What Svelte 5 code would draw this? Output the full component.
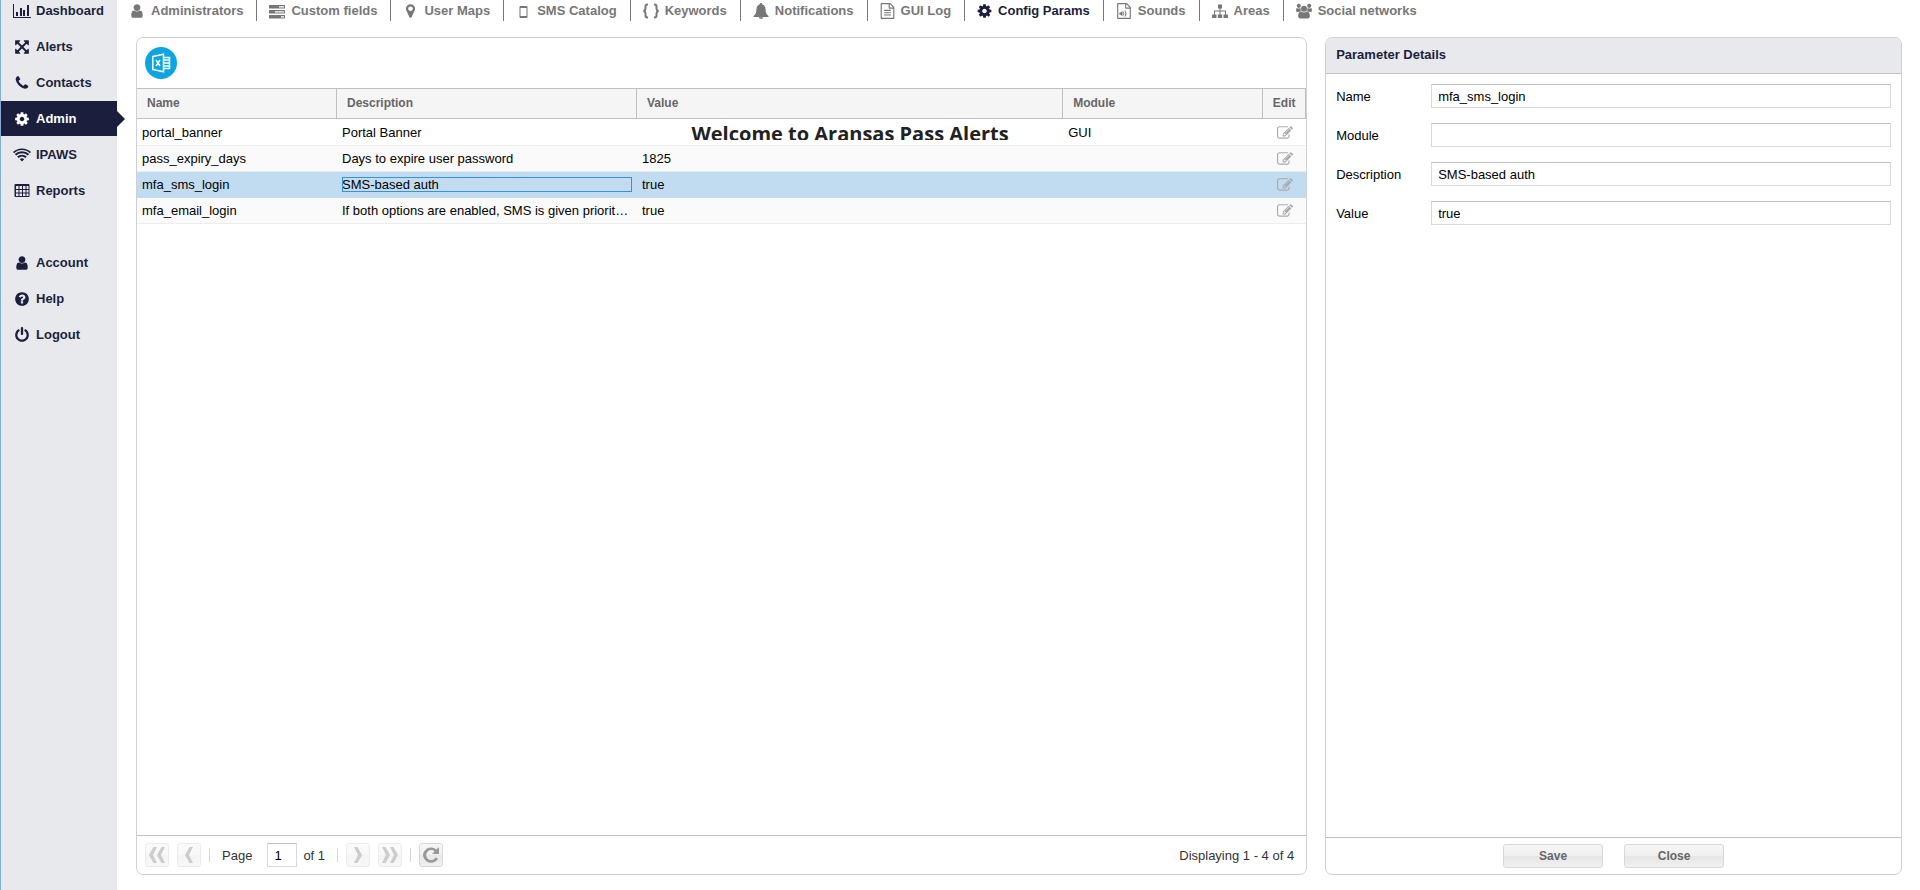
<script>
  const icons = {
    chart: {
      box: "0 0 18 16",
      d: "M0 1h1v13h17v1H0zM3 9h2v4H3zM7 5h2v8H7zM10 7h2v6h-2zM14 2h2v11h-2z",
    },
    arrows: {
      box: "0 0 1792 1792",
      d: "M1411 541l-355 355 355 355 144-144q29-31 70-14 39 17 39 59v448q0 26-19 45t-45 19h-448q-42 0-59-40-17-39 14-69l144-144-355-355-355 355 144 144q31 30 14 69-17 40-59 40h-448q-26 0-45-19t-19-45v-448q0-42 40-59 39-17 69 14l144 144 355-355-355-355-144 144q-19 19-45 19-12 0-24-5-40-17-40-59v-448q0-26 19-45t45-19h448q42 0 59 40 17 39-14 69l-144 144 355 355 355-355-144-144q-31-30-14-69 17-40 59-40h448q26 0 45 19t19 45v448q0 42-39 59-13 5-25 5-26 0-45-19z",
    },
    phone: {
      box: "0 0 1792 1792",
      d: "M1600 1240q0 27-10 70.500t-21 68.500q-21 50-122 106-94 51-186 51-27 0-52.500-3.500t-57.500-12.500-47.500-14.500-55.500-20.500-49-18q-98-35-175-83-128-79-264.500-215.500t-215.500-264.500q-48-77-83-175-3-9-18-49t-20.500-55.500-14.500-47.500-12.500-57.500-3.500-52.500q0-92 51-186 56-101 106-122 25-11 68.500-21t70.500-10q14 0 21 3 18 6 53 76 11 19 30 54t35 63.500 31 53.500q3 4 17.500 25t21.500 35.500 7 28.500q0 20-28.500 50t-62 55-62 53-28.500 46q0 9 5 22.500t8.500 20.500 14 24 11.500 19q76 137 174 235t235 174q2 1 19 11.500t24 14 20.500 8.500 22.500 5q18 0 46-28.500t53-62 55-62 50-28.500q14 0 28.500 7t35.500 21.500 25 17.500q25 15 53.500 31t63.500 35 54 30q70 35 76 53 3 7 3 21z",
    },
    cog: {
      box: "0 0 1792 1792",
      slim: true,
      d: "M1152 896q0-106-75-181t-181-75-181 75-75 181 75 181 181 75 181-75 75-181zm512-109v222q0 12-8 23t-20 13l-185 28q-19 54-39 91 35 50 107 138 10 12 10 25t-9 23q-27 37-99 108t-94 71q-12 0-26-9l-138-108q-44 23-91 38-16 136-29 186-7 28-36 28h-222q-14 0-24.500-8.500t-11.500-21.500l-28-184q-49-16-90-37l-141 107q-10 9-25 9-14 0-25-11-126-114-165-168-7-10-7-23 0-12 8-23 15-21 51-66.500t54-70.500q-27-50-41-99l-183-27q-13-2-21-12.500t-8-23.500v-222q0-12 8-23t19-13l186-28q14-46 39-92-40-57-107-138-10-12-10-24 0-10 9-23 26-36 98.500-107.500t94.500-71.500q13 0 26 10l138 107q44-23 91-38 16-136 29-186 7-28 36-28h222q14 0 24.500 8.500t11.500 21.500l28 184q49 16 90 37l142-107q9-9 24-9 13 0 25 10 129 119 165 170 7 8 7 22 0 12-8 23-15 21-51 66.500t-54 70.500q26 50 41 98l183 28q13 2 21 12.500t8 23.500z",
    },
    wifi: {
      box: "0 0 18 16",
      d: "M9 14.500l-2.200-2.300a3.200 3.200 0 0 1 4.400 0zM5.600 11L4.200 9.600a7 7 0 0 1 9.600 0L12.400 11a5 5 0 0 0-6.800 0zM3.200 8.500L1.800 7.100a10.400 10.400 0 0 1 14.400 0l-1.400 1.400a8.300 8.300 0 0 0-11.600 0zM1.200 6.300L0 5a13 13 0 0 1 18 0l-1.200 1.300a11 11 0 0 0-15.600 0z",
    },
    table: {
      box: "0 0 16 16",
      d: "M1.500 1h13a1 1 0 0 1 1 1v11a1 1 0 0 1-1 1h-13a1 1 0 0 1-1-1V2a1 1 0 0 1 1-1zM2 3v3h2.500V3zM5.500 3v3H8V3zM9 3v3h2.500V3zM12.500 3v3h2V3zM2 7v2.500h2.500V7zM5.500 7v2.500H8V7zM9 7v2.500h2.500V7zM12.500 7v2.500h2V7zM2 10.500V13h2.500v-2.500zM5.500 10.500V13H8v-2.500zM9 10.500V13h2.500v-2.500zM12.500 10.500V13h2v-2.500z",
    },
    user: {
      box: "0 0 1792 1792",
      d: "M1536 1399q0 109-62.500 187t-150.500 78h-854q-88 0-150.500-78t-62.500-187q0-85 8.500-160.500t31.500-152 58.500-131 94-89 134.500-34.500q131 128 313 128t313-128q76 0 134.500 34.500t94 89 58.500 131 31.500 152 8.500 160.500zm-256-887q0 159-112.500 271.500t-271.500 112.500-271.500-112.500-112.500-271.500 112.500-271.500 271.500-112.500 271.500 112.500 112.500 271.500z",
    },
    help: {
      box: "0 0 1792 1792",
      d: "M1024 1376v-192q0-14-9-23t-23-9h-192q-14 0-23 9t-9 23v192q0 14 9 23t23 9h192q14 0 23-9t9-23zm256-672q0-88-55.500-163t-138.500-116-170-41q-243 0-371 213-15 24 8 42l132 100q7 6 19 6 16 0 25-12 53-68 86-92 34-24 86-24 48 0 85.500 26t37.500 59q0 38-20 61t-68 45q-63 28-115.500 86.500t-52.500 125.500v36q0 14 9 23t23 9h192q14 0 23-9t9-23q0-19 21.500-49.500t54.500-49.500q32-18 49-28.500t46-35 44.500-48 28-60.500 12.500-81zm384 192q0 209-103 385.500t-279.500 279.500-385.500 103-385.500-103-279.500-279.500-103-385.500 103-385.500 279.500-279.500 385.500-103 385.500 103 279.500 279.500 103 385.500z",
    },
    power: {
      box: "0 0 1792 1792",
      d: "M1664 896q0 156-61 298t-164 245-245 164-298 61-298-61-245-164-164-245-61-298q0-182 80.500-343t226.500-270q43-32 95.500-25t83.500 50q32 42 24.500 94.500t-49.500 84.500q-98 74-151.500 181t-53.500 228q0 104 40.500 198.500t109.500 163.500 163.500 109.500 198.500 40.500 198.500-40.500 163.500-109.500 109.500-163.500 40.500-198.500q0-121-53.500-228t-151.500-181q-42-32-49.500-84.500t24.500-94.500q31-43 84-50t95 25q146 109 226.500 270t80.500 343zm-640-768v640q0 52-38 90t-90 38-90-38-38-90v-640q0-52 38-90t90-38 90 38 38 90z",
    },
    tasks: {
      box: "0 0 16 16",
      d: "M.5 2h15a.5.5 0 0 1 .5.5v2.500a.5.5 0 0 1-.5.500H.5a.5.500 0 0 1-.5-.5v-2.500A.5.5 0 0 1 .5 2zM10 3.200v1.200h5V3.200zM.5 7h15a.5.5 0 0 1 .5.5v2.500a.5.5 0 0 1-.5.5H.5a.5.500 0 0 1-.5-.5V7.500A.5.5 0 0 1 .5 7zM6 8.200v1.200h9V8.200zM.5 12h15a.5.5 0 0 1 .5.5v2.500a.5.5 0 0 1-.5.5H.5a.5.500 0 0 1-.5-.5v-2.500a.5.5 0 0 1 .5-.5zM12 13.200v1.200h3v-1.200z",
    },
    marker: {
      box: "0 0 1792 1792",
      slim: true,
      d: "M1152 640q0-106-75-181t-181-75-181 75-75 181 75 181 181 75 181-75 75-181zm256 0q0 109-33 179l-364 774q-16 33-47.500 52t-67.500 19-67.500-19-46.500-52l-365-774q-33-70-33-179 0-212 150-362t362-150 362 150 150 362z",
    },
    mobile: {
      box: "0 0 16 16",
      slim: true,
      d: "M5 3h6a1 1 0 0 1 1 1v10a1 1 0 0 1-1 1H5a1 1 0 0 1-1-1V4a1 1 0 0 1 1-1zM5 5v8h6V5z",
    },
    braces: {
      box: "0 0 16 16",
      stroke: true,
      d: "M5 1.500h-.500Q2.500 1.500 2.500 3.500v2.300Q2.500 7.500 .5 8q2 .5 2 2.200v2.300q0 2 2 2h.5M11 1.500h.5q2 0 2 2v2.300q0 1.700 2 2.200-2 .5-2 2.200v2.300q0 2-2 2h-.5",
    },
    bell: {
      box: "0 0 16 16",
      d: "M8 0a1.200 1.200 0 0 1 1.200 1.300C11.500 1.900 12.500 4 12.600 6.500c.1 3.200.8 5 2.900 6.500v1H.5v-1c2.100-1.500 2.800-3.300 2.900-6.500.1-2.500 1.100-4.600 3.400-5.200A1.200 1.200 0 0 1 8 0zM5.800 14.300h4.400a2.200 1.700 0 0 1-4.400 0z",
    },
    file: {
      box: "0 0 1792 1792",
      slim: true,
      d: "M1596 380q28 28 48 76t20 88v1152q0 40-28 68t-68 28h-1344q-40 0-68-28t-28-68v-1600q0-40 28-68t68-28h896q40 0 88 20t76 48zm-444-244v376h376q-10-29-22-41l-313-313q-12-12-41-22zm384 1528v-1024h-416q-40 0-68-28t-28-68v-416h-768v1536h1280zm-1024-864q0-14 9-23t23-9h704q14 0 23 9t9 23v64q0 14-9 23t-23 9h-704q-14 0-23-9t-9-23v-64zm736 224q14 0 23 9t9 23v64q0 14-9 23t-23 9h-704q-14 0-23-9t-9-23v-64q0-14 9-23t23-9h704zm0 256q14 0 23 9t9 23v64q0 14-9 23t-23 9h-704q-14 0-23-9t-9-23v-64q0-14 9-23t23-9h704z",
    },
    sound: {
      box: "0 0 1792 1792",
      d: "M1596 380q28 28 48 76t20 88v1152q0 40-28 68t-68 28h-1344q-40 0-68-28t-28-68v-1600q0-40 28-68t68-28h896q40 0 88 20t76 48zm-444-244v376h376q-10-29-22-41l-313-313q-12-12-41-22zm384 1528v-1024h-416q-40 0-68-28t-28-68v-416h-768v1536h1280zM384 1050h140l200-190v640l-200-190H384zM850 960q150 220 0 440l-75-60q100-160 0-320zM1030 810q290 370 0 740l-85-65q210-305 0-610z",
    },
    sitemap: {
      box: "0 0 16 16",
      d: "M6 1.500h4v4H8.500V7.500h5.500V11.500h2v3.500h-4.500v-3.500H13V8.500H8.500v3h1.700v3.500H5.800v-3.500h1.700v-3H3v3h1.500v3.500H0v-3.500h2V7.500h5.500v-2H6z",
    },
    group: {
      box: "0 0 17 16",
      d: "M8.500 2.500a3.200 3.200 0 1 1 0 6.400 3.200 3.200 0 0 1 0-6.400zM5.300 8.200Q8.500 11.200 11.700 8.200c2.300.3 3 2.700 3 5.300q0 2.500-2.200 2.500H4.500q-2.200 0-2.200-2.500c0-2.600.7-5 3-5.300zM3 .3a2.200 2.200 0 1 1 0 4.400 2.200 2.200 0 0 1 0-4.400zM14 .3a2.200 2.200 0 1 1 0 4.400 2.200 2.200 0 0 1 0-4.400zM.8 4.700q2 1.300 3.800.2.100 1.600 1 2.700-1.600.1-2.500 1.400H1.200Q0 9 0 7.500 0 5.300.8 4.700zM16.200 4.700q-2 1.300-3.800.2-.1 1.600-1 2.700 1.600.1 2.500 1.400h1.900Q17 9 17 7.500q0-2.200-.8-2.800z",
    },
    edit: {
      box: "0 0 1792 1792",
      d: "M888 1184l116-116-152-152-116 116v56h96v96h56zm440-720q-16-16-33 1l-350 350q-17 17-1 33t33-1l350-350q17-17 1-33zm80 594v190q0 119-84.500 203.500t-203.500 84.500h-832q-119 0-203.500-84.500t-84.500-203.500v-832q0-119 84.500-203.500t203.500-84.500h832q63 0 117 25 15 7 18 23 3 17-9 29l-49 49q-14 14-32 8-23-6-45-6h-832q-66 0-113 47t-47 113v832q0 66 47 113t113 47h832q66 0 113-47t47-113v-126q0-13 9-22l64-64q15-15 35-7t20 29zm-96-738l288 288-672 672h-288v-288zm444 132l-92 92-288-288 92-92q28-28 68-28t68 28l152 152q28 28 28 68t-28 68z",
    },
    first: { box: "0 0 16 16", d: "M4.500 0H8L4 8l4 8H4.500L0 8zM12.500 0H16l-4 8 4 8h-3.500L8 8z" },
    prev: { box: "0 0 16 16", d: "M8.500 0H12L8 8l4 8H8.500L4 8z" },
    next: { box: "0 0 16 16", d: "M7.500 0H4l4 8-4 8h3.500L12 8z" },
    last: { box: "0 0 16 16", d: "M3.500 0H0l4 8-4 8h3.500L8 8zM11.500 0H8l4 8-4 8h3.500L16 8z" },
    refresh: {
      box: "0 0 16 16",
      d: "M16 0v7H9l2.600-2.600A5 5 0 1 0 12.600 10.500l2.500 1.200A8 7.600 0 1 1 13.500 2.500z",
    },
  };

  const menu = [
    { label: "Dashboard", icon: "chart" },
    { label: "Alerts", icon: "arrows" },
    { label: "Contacts", icon: "phone" },
    { label: "Admin", icon: "cog" },
    { label: "IPAWS", icon: "wifi" },
    { label: "Reports", icon: "table" },
    { label: "Account", icon: "user", spaced: true },
    { label: "Help", icon: "help" },
    { label: "Logout", icon: "power" },
  ];

  const tabs = [
    { label: "Administrators", icon: "user" },
    { label: "Custom fields", icon: "tasks" },
    { label: "User Maps", icon: "marker" },
    { label: "SMS Catalog", icon: "mobile" },
    { label: "Keywords", icon: "braces" },
    { label: "Notifications", icon: "bell" },
    { label: "GUI Log", icon: "file" },
    { label: "Config Params", icon: "cog" },
    { label: "Sounds", icon: "sound" },
    { label: "Areas", icon: "sitemap" },
    { label: "Social networks", icon: "group" },
  ];

  const params = [
    { name: "portal_banner", description: "Portal Banner", value: "Welcome to Aransas Pass Alerts", module: "GUI", banner: true },
    { name: "pass_expiry_days", description: "Days to expire user password", value: "1825", module: "" },
    { name: "mfa_sms_login", description: "SMS-based auth", value: "true", module: "" },
    { name: "mfa_email_login", description: "If both options are enabled, SMS is given priority over email", value: "true", module: "" },
  ];

  let activeMenu = $state("Admin");
  let activeTab = $state("Config Params");
  let selected = $state(2);
  let page = $state("1");
  let form = $state({ ...params[2] });

  const select = (index) => {
    selected = index;
    form = { ...params[index] };
  };
</script>

{#snippet icon(name)}
  <svg
    class="icon"
    class:stroke={icons[name].stroke}
    class:slim={icons[name].slim}
    viewBox={icons[name].box}
    preserveAspectRatio={icons[name].slim ? "xMidYMid slice" : "xMidYMid meet"}
    aria-hidden="true"
  >
    <path fill-rule="evenodd" d={icons[name].d} />
  </svg>
{/snippet}

<div class="app">
  <aside>
    <nav class="menu">
      {#each menu as item}
        <a
          href="#{item.label.toLowerCase()}"
          class:active={item.label === activeMenu}
          class:spaced={item.spaced}
          onclick={() => (activeMenu = item.label)}
        >
          {@render icon(item.icon)}
          <span>{item.label}</span>
        </a>
      {/each}
    </nav>
  </aside>

  <main>
    <nav class="tabs">
      {#each tabs as tab}
        <a href="#admin" class:active={tab.label === activeTab} onclick={() => (activeTab = tab.label)}>
          {@render icon(tab.icon)}
          <span>{tab.label}</span>
        </a>
      {/each}
    </nav>

    <div class="panels">
      <section class="panel">
        <div class="toolbar">
          <button class="excel" aria-label="Export to Excel">
            <svg viewBox="0 0 32 32" fill="none" stroke="#fff" aria-hidden="true">
              <path stroke-width="1.500" d="M7.800 9.500L18.500 7.200V24.800L7.800 22.500zM19 10.500h5.500v11H19M19 13h5.500M19 16h5.500M19 19h5.500" />
              <path stroke-width="1.500" d="M11 13l4 6M15 13l-4 6" />
            </svg>
          </button>
        </div>

        <div class="grid">
          <table>
            <colgroup>
              <col class="col-name" />
              <col class="col-description" />
              <col />
              <col class="col-module" />
              <col class="col-edit" />
            </colgroup>
            <thead>
              <tr>
                <th>Name</th>
                <th>Description</th>
                <th>Value</th>
                <th>Module</th>
                <th class="edit">Edit</th>
              </tr>
            </thead>
            <tbody>
              {#each params as param, i}
                <tr class:selected={i === selected} onclick={() => select(i)}>
                  <td><div>{param.name}</div></td>
                  <td><div class:focused={i === selected}>{param.description}</div></td>
                  <td><div class:banner={param.banner}>{param.value}</div></td>
                  <td><div>{param.module}</div></td>
                  <td class="edit">
                    <button aria-label="Edit {param.name}">{@render icon("edit")}</button>
                  </td>
                </tr>
              {/each}
            </tbody>
          </table>
        </div>

        <footer class="pager">
          <button disabled aria-label="First page">{@render icon("first")}</button>
          <button disabled aria-label="Previous page">{@render icon("prev")}</button>
          <span class="separator"></span>
          <label for="page">Page</label>
          <input id="page" type="text" bind:value={page} />
          <span class="total">of 1</span>
          <span class="separator"></span>
          <button disabled aria-label="Next page">{@render icon("next")}</button>
          <button disabled aria-label="Last page">{@render icon("last")}</button>
          <span class="separator"></span>
          <button aria-label="Refresh">{@render icon("refresh")}</button>
          <span class="status">Displaying 1 - 4 of 4</span>
        </footer>
      </section>

      <section class="panel">
        <h2>Parameter Details</h2>
        <form id="details">
          <label for="name">Name</label>
          <input id="name" type="text" bind:value={form.name} />
          <label for="module">Module</label>
          <input id="module" type="text" bind:value={form.module} />
          <label for="description">Description</label>
          <input id="description" type="text" bind:value={form.description} />
          <label for="value">Value</label>
          <input id="value" type="text" bind:value={form.value} />
        </form>
        <footer class="actions">
          <button type="button">Save</button>
          <button type="button">Close</button>
        </footer>
      </section>
    </div>
  </main>
</div>

<style>
  :global(body) {
    background: #fff;
  }

  .app {
    display: flex;
    min-height: 100vh;
    font-family: "Liberation Sans", Arial, sans-serif;
    font-size: 13px;
    line-height: 15px;
    color: #000;
  }
  .app :global(*) {
    box-sizing: border-box;
  }

  button,
  input {
    font: inherit;
    margin: 0;
  }
  button {
    padding: 0;
    cursor: pointer;
  }
  a {
    color: inherit;
    text-decoration: none;
  }

  .icon {
    flex: none;
    width: 16px;
    height: 16px;
    fill: currentColor;
  }
  .icon.slim {
    width: 15px;
  }
  .icon.stroke {
    fill: none;
    stroke: currentColor;
    stroke-width: 2;
  }

  aside {
    flex: none;
    width: 117px;
    background: #e8e9ed;
    border-left: 1px solid #86abd3;
  }
  .menu {
    display: flex;
    flex-direction: column;
    gap: 1px;
    margin-top: -7px;
    font-weight: bold;
    color: #1b1f3d;
  }
  .menu a {
    position: relative;
    display: flex;
    align-items: center;
    gap: 5px;
    height: 35px;
    padding-left: 12px;
  }
  .menu .icon {
    width: 18px;
  }
  .menu .icon.slim {
    width: 16px;
    margin: 0 1px;
  }
  .menu a.spaced {
    margin-top: 36px;
  }
  .menu a.active {
    background: #1b1f3d;
    color: #fff;
  }
  .menu a.active::after {
    content: "";
    position: absolute;
    left: 100%;
    top: 10px;
    border: 8px solid transparent;
    border-left-color: #1b1f3d;
    border-right: 0;
  }

  main {
    flex: 1;
    min-width: 0;
    display: flex;
    flex-direction: column;
    padding: 0 18px 15px 19px;
  }

  .tabs {
    display: flex;
    height: 21px;
    margin-left: -7px;
    font-weight: bold;
    color: #777;
  }
  .tabs a {
    display: flex;
    align-items: center;
    gap: 6px;
    padding: 0 13px 0 12px;
    border-right: 1px solid #777;
    white-space: nowrap;
  }
  .tabs a:first-child {
    padding-left: 0;
  }
  .tabs a:last-child {
    border-right: 0;
  }
  .tabs a.active {
    color: #1b1f3d;
  }

  .panels {
    flex: 1;
    display: grid;
    grid-template-columns: 67fr 33fr;
    gap: 18px;
    margin-top: 16px;
  }
  .panel {
    display: flex;
    flex-direction: column;
    min-width: 0;
    border: 1px solid #ced0d6;
    border-radius: 7px;
    overflow: hidden;
  }

  .toolbar {
    padding: 9px 8px;
    border-bottom: 1px solid #c0c0c0;
  }
  .excel {
    display: block;
    width: 32px;
    height: 32px;
    border: 0;
    border-radius: 50%;
    background: #0ca5e2;
  }
  .excel svg {
    display: block;
  }

  .grid {
    flex: 1;
  }
  table {
    width: 100%;
    table-layout: fixed;
    border-collapse: separate;
    border-spacing: 0;
  }
  .col-name,
  .col-module {
    width: 200px;
  }
  .col-description {
    width: 300px;
  }
  .col-edit {
    width: 43px;
  }
  th {
    height: 30px;
    padding: 0 10px;
    text-align: left;
    font-size: 12px;
    color: #666;
    background: #f5f5f5;
    border-right: 1px solid #c0c0c0;
    border-bottom: 1px solid #c0c0c0;
  }
  td {
    height: 26px;
    padding: 0 5px;
    border-bottom: 1px solid #ededed;
  }
  tbody tr:first-child td {
    height: 27px;
    padding-top: 1px;
  }
  td div {
    height: 15px;
    overflow: hidden;
    white-space: nowrap;
    text-overflow: ellipsis;
  }
  tbody tr:nth-child(even) td {
    background: #fafafa;
  }
  tbody tr.selected td {
    background: #c1dcf1;
    border-bottom-color: #c1dcf1;
  }
  td .focused {
    outline: 1px solid #3892d3;
    outline-offset: -1px;
  }
  td .banner {
    text-align: center;
    font-family: "Open Sans", "Noto Sans", sans-serif;
    font-size: 20px;
    line-height: 18px;
    font-weight: bold;
    color: #222;
  }
  th.edit,
  td.edit {
    padding: 0;
    text-align: center;
  }
  td button {
    display: block;
    margin: 0 auto;
    border: 0;
    background: none;
    color: #aaa;
  }
  td button .icon {
    display: block;
  }

  .pager {
    display: flex;
    align-items: center;
    gap: 8px;
    height: 39px;
    padding: 0 12px 0 8px;
    border-top: 1px solid #c0c0c0;
    color: #333;
  }
  .pager button {
    display: flex;
    align-items: center;
    justify-content: center;
    width: 24px;
    height: 24px;
    border: 1px solid #d8d8d8;
    border-radius: 3px;
    background: linear-gradient(#f6f6f6, #f0f0f0 50%, #e8e8e8 50%, #f0f0f0);
    color: #999;
  }
  .pager button:disabled {
    border-color: #ebebeb;
    background: linear-gradient(#fbfbfb, #f8f8f8 50%, #f4f4f4 50%, #f8f8f8);
    color: #ccc;
  }
  .pager .separator {
    width: 1px;
    height: 14px;
    background: #d8d8d8;
  }
  .pager label {
    margin: 0 7px 0 4px;
  }
  .pager .total {
    margin: 0 4px 0 -2px;
  }
  .pager .status {
    margin-left: auto;
  }

  input {
    width: 100%;
    height: 24px;
    padding: 0 6px;
    border: 1px solid #d9d9d9;
    border-top-color: #c0c0c0;
    border-radius: 0;
    background: #fff;
    color: #000;
  }
  .pager input {
    width: 30px;
  }

  h2 {
    margin: 0;
    padding: 9px 10px 11px;
    font-size: 13px;
    line-height: 15px;
    color: #1b1f3d;
    background: #e8e9ed;
    border-bottom: 1px solid #c0c0c0;
  }
  form {
    flex: 1;
    display: grid;
    grid-template-columns: 90px 1fr;
    gap: 15px 5px;
    align-content: start;
    align-items: center;
    padding: 10px;
  }
  .actions {
    display: flex;
    align-items: center;
    justify-content: center;
    gap: 21px;
    height: 37px;
    border-top: 1px solid #c0c0c0;
  }
  .actions button {
    width: 100px;
    height: 24px;
    border: 1px solid #d8d8d8;
    border-radius: 3px;
    background: linear-gradient(#f6f6f6, #f0f0f0 50%, #e6e6e6 50%, #f0f0f0);
    font-size: 12px;
    font-weight: bold;
    color: #666;
  }
</style>
